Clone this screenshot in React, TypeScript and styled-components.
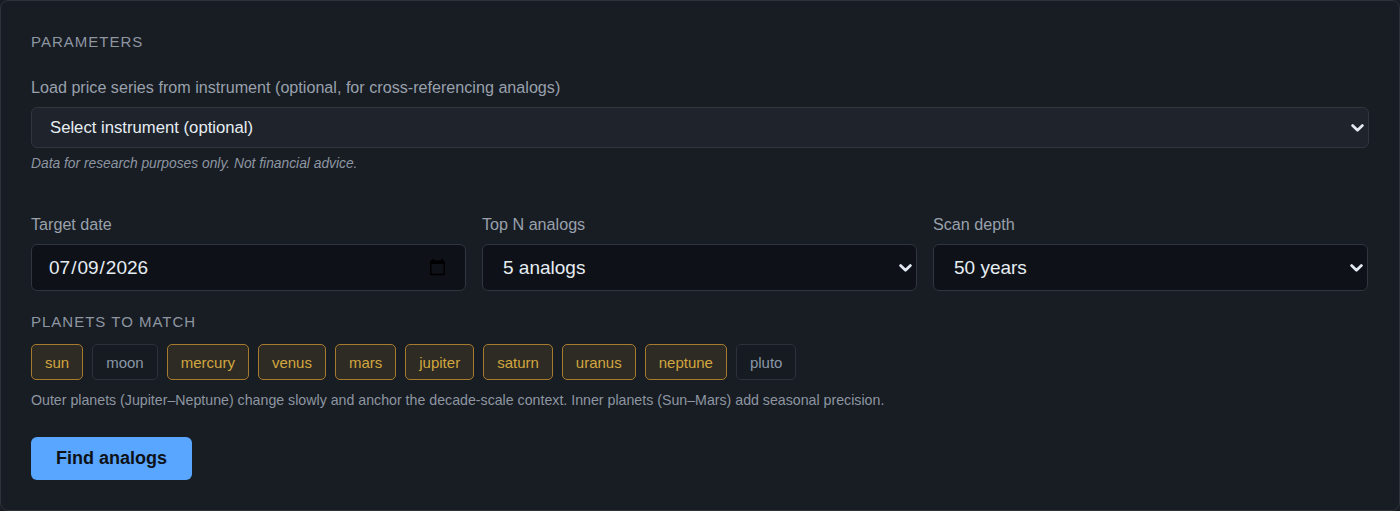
import React, { useState } from "react";
import styled, { createGlobalStyle } from "styled-components";

const GlobalStyle = createGlobalStyle`
  html, body {
    margin: 0;
    padding: 0;
    background: #181c23;
  }
  body {
    font-family: "Liberation Sans", Arial, sans-serif;
    color: #e6edf3;
  }
`;

// bold light chevron for the dropdowns
const chevron = `url("data:image/svg+xml,%3Csvg xmlns='http://www.w3.org/2000/svg' width='13' height='8' viewBox='0 0 13 8'%3E%3Cpath d='M1.6 1.6L6.5 6.2l4.9-4.6' fill='none' stroke='%23e2e8ef' stroke-width='2.8' stroke-linecap='round' stroke-linejoin='round'/%3E%3C/svg%3E")`;

const Panel = styled.section`
  box-sizing: border-box;
  width: 1400px;
  height: 511px;
  background: #181c23;
  border: 1px solid #2e333b;
  border-radius: 8px;
  padding: 31px 30px 30px;
  display: flex;
  flex-direction: column;
`;

const SectionTitle = styled.h2<{ $mb: number }>`
  margin: 0 0 ${(p) => p.$mb}px;
  font-size: 15px;
  font-weight: 400;
  letter-spacing: 1px;
  text-transform: uppercase;
  color: #8d96a1;
  line-height: 20px;
`;

const Label = styled.label`
  display: block;
  font-size: 16.15px;
  line-height: 20px;
  color: #98a1ac;
  margin-bottom: 10px;
`;

const Field = styled.div`
  display: flex;
  flex-direction: column;
`;

const selectArrow = `
  appearance: none;
  background-image: ${chevron};
  background-repeat: no-repeat;
  background-size: 13px 8px;
  background-position: right 4px center;
`;

const InstrumentSelect = styled.select`
  ${selectArrow}
  box-sizing: border-box;
  width: 100%;
  height: 41px;
  padding: 0 18px;
  background-color: #1f232b;
  border: 1px solid #30353e;
  border-radius: 6px;
  color: #e6edf3;
  font-family: inherit;
  font-size: 16.7px;
`;

const Note = styled.p`
  margin: 8px 0 0;
  font-size: 13.8px;
  font-style: italic;
  color: #8d96a1;
  line-height: 16px;
`;

const Grid = styled.div`
  display: grid;
  grid-template-columns: repeat(3, 435px);
  gap: 16px;
  margin-top: 42px;
`;

const inputBase = `
  box-sizing: border-box;
  width: 100%;
  height: 47px;
  background-color: #0e1117;
  border: 1px solid #30353e;
  border-radius: 6px;
  color: #e6edf3;
  font-family: inherit;
  font-size: 19px;
`;

const DateInput = styled.input`
  ${inputBase}
  padding: 0 16px;
`;

const Select = styled.select`
  ${inputBase}
  ${selectArrow}
  padding: 0 20px;
`;

const Chips = styled.div`
  display: flex;
  gap: 9px;
  flex-wrap: wrap;
`;

const Chip = styled.button<{ $on: boolean }>`
  box-sizing: border-box;
  height: 36px;
  padding: 0 13px;
  border-radius: 5px;
  font-family: inherit;
  font-size: 15px;
  cursor: pointer;
  border: 1px solid ${(p) => (p.$on ? "#a67b2e" : "#2c323b")};
  background: ${(p) => (p.$on ? "#2e2b24" : "#161a21")};
  color: ${(p) => (p.$on ? "#d2a63f" : "#8a97a6")};
`;

const Hint = styled.p`
  margin: 11px 0 0;
  font-size: 14.2px;
  line-height: 18px;
  color: #8d96a1;
`;

const SubmitButton = styled.button`
  align-self: flex-start;
  margin-top: 28px;
  width: 161px;
  height: 43px;
  border: none;
  border-radius: 6px;
  background: #58a6ff;
  color: #0e1117;
  font-family: inherit;
  font-size: 18px;
  font-weight: 700;
  cursor: pointer;
`;

const Spacer = styled.div<{ $h: number }>`
  height: ${(p) => p.$h}px;
  flex: none;
`;

const PLANETS = [
  "sun",
  "moon",
  "mercury",
  "venus",
  "mars",
  "jupiter",
  "saturn",
  "uranus",
  "neptune",
  "pluto",
];

export default function App() {
  const [selected, setSelected] = useState<string[]>(
    PLANETS.filter((p) => p !== "moon" && p !== "pluto")
  );

  const toggle = (name: string) =>
    setSelected((cur) =>
      cur.includes(name) ? cur.filter((n) => n !== name) : [...cur, name]
    );

  return (
    <>
      <GlobalStyle />
      <Panel>
        <SectionTitle $mb={25}>Parameters</SectionTitle>
        <Label>
          Load price series from instrument (optional, for cross-referencing
          analogs)
        </Label>
        <InstrumentSelect defaultValue="">
          <option value="">Select instrument (optional)</option>
        </InstrumentSelect>
        <Note>Data for research purposes only. Not financial advice.</Note>

        <Grid>
          <Field>
            <Label>Target date</Label>
            <DateInput type="date" defaultValue="2026-07-09" />
          </Field>
          <Field>
            <Label>Top N analogs</Label>
            <Select defaultValue="5">
              <option value="3">3 analogs</option>
              <option value="5">5 analogs</option>
              <option value="10">10 analogs</option>
            </Select>
          </Field>
          <Field>
            <Label>Scan depth</Label>
            <Select defaultValue="50">
              <option value="25">25 years</option>
              <option value="50">50 years</option>
              <option value="100">100 years</option>
            </Select>
          </Field>
        </Grid>

        <Spacer $h={21} />
        <SectionTitle $mb={12}>Planets to match</SectionTitle>
        <Chips>
          {PLANETS.map((p) => (
            <Chip key={p} $on={selected.includes(p)} onClick={() => toggle(p)}>
              {p}
            </Chip>
          ))}
        </Chips>
        <Hint>
          Outer planets (Jupiter–Neptune) change slowly and anchor the
          decade-scale context. Inner planets (Sun–Mars) add seasonal precision.
        </Hint>

        <SubmitButton>Find analogs</SubmitButton>
      </Panel>
    </>
  );
}
